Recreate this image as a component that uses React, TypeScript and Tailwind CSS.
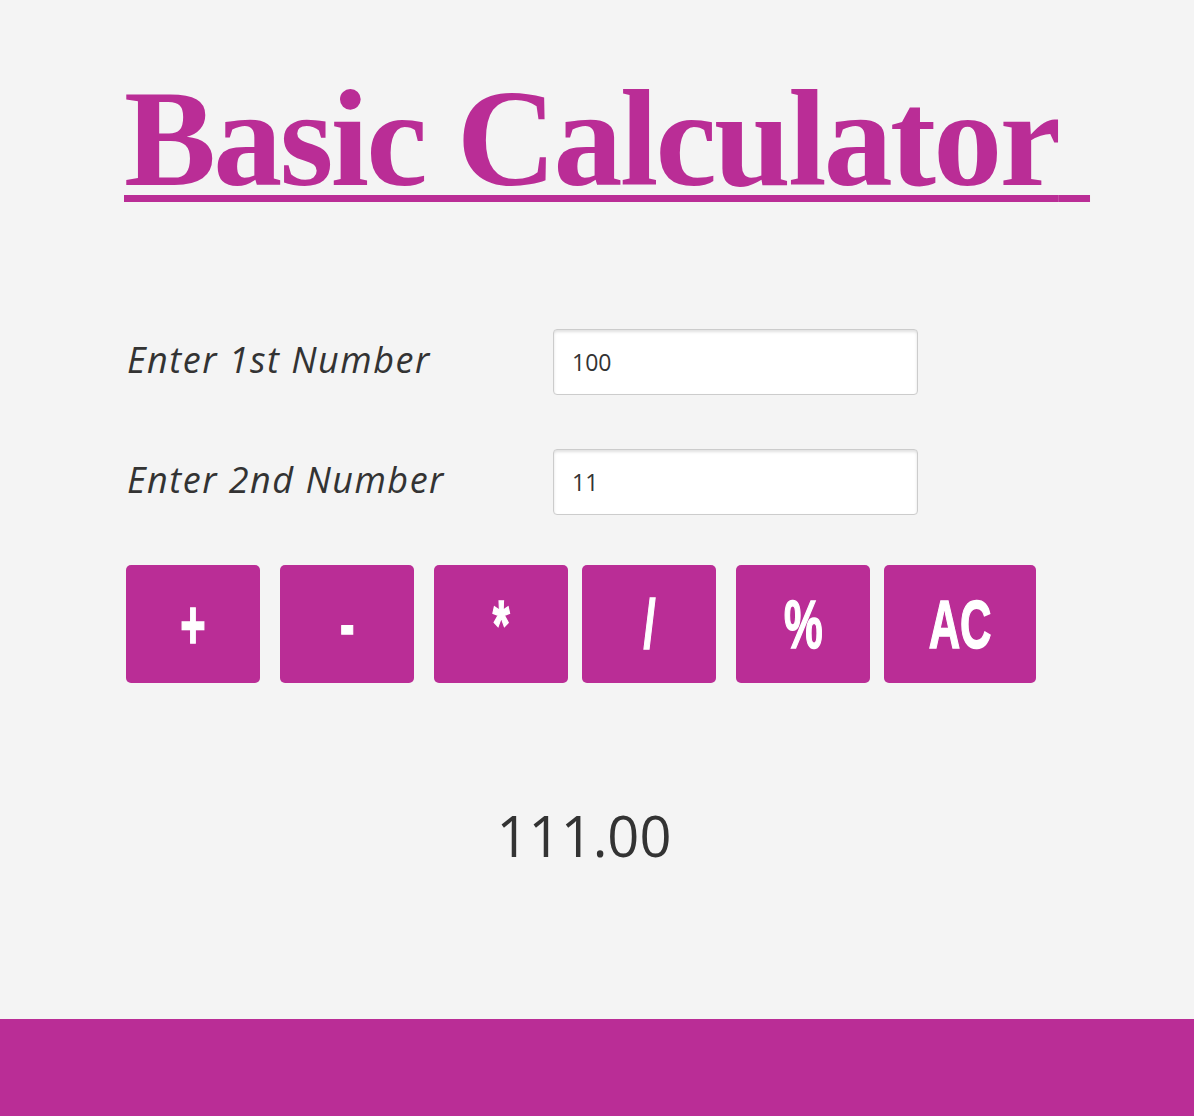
import { useState } from 'react';

const buttons = [
  { label: '+', cls: 'ml-[2px] w-[134px]' },
  { label: '-', cls: 'ml-[20px] w-[134px]' },
  { label: '*', cls: 'ml-[20px] w-[134px]' },
  { label: '/', cls: 'ml-[14px] w-[134px]' },
  { label: '%', cls: 'ml-[20px] w-[134px]' },
  { label: 'AC', cls: 'ml-[14px] w-[152px]' },
];

export default function App() {
  const [a, setA] = useState('100');
  const [b, setB] = useState('11');
  const [result, setResult] = useState('111.00');

  const calc = (op: string) => {
    if (op === 'AC') {
      setA('');
      setB('');
      setResult('');
      return;
    }
    const x = parseFloat(a) || 0;
    const y = parseFloat(b) || 0;
    let r = 0;
    if (op === '+') r = x + y;
    if (op === '-') r = x - y;
    if (op === '*') r = x * y;
    if (op === '/') r = x / y;
    if (op === '%') r = x % y;
    setResult(r.toFixed(2));
  };

  const inputCls =
    "w-[365px] h-[66px] bg-white border border-[#cccccc] rounded-[4px] shadow-[inset_0_2px_3px_rgba(0,0,0,0.12)] pl-[18px] text-[23px] text-[#333333] outline-none font-['Open_Sans',sans-serif]";
  const labelCls =
    "w-[429px] pl-[3px] pb-[4px] italic text-[36px] tracking-[1.5px] text-[#333333] font-['Open_Sans',sans-serif]";

  return (
    <div className="min-h-screen bg-[#f4f4f4] flex flex-col">
      <main className="px-[124px] pt-[70px]">
        <h1 className="whitespace-nowrap text-[138px] leading-none font-bold tracking-[-2.7px] text-[#ba2d96] underline decoration-[7px] underline-offset-[10px] font-['Liberation_Serif',serif]">
          Basic Calculator{'\u00a0'}
        </h1>

        <div className="mt-[121px] flex items-center">
          <label className={labelCls}>Enter 1st Number</label>
          <input className={inputCls} value={a} onChange={(e) => setA(e.target.value)} />
        </div>
        <div className="mt-[54px] flex items-center">
          <label className={labelCls}>Enter 2nd Number</label>
          <input className={inputCls} value={b} onChange={(e) => setB(e.target.value)} />
        </div>

        <div className="mt-[50px] flex">
          {buttons.map((btn) => (
            <button
              key={btn.label}
              onClick={() => calc(btn.label)}
              className={`${btn.cls} h-[118px] rounded-[5px] bg-[#ba2d96] text-white flex items-center justify-center`}
            >
              <span className="inline-block scale-x-[0.64] text-[68px] leading-none font-bold [-webkit-text-stroke:1.5px_white] font-['Liberation_Sans_Narrow','Liberation_Sans',sans-serif]">
                {btn.label}
              </span>
            </button>
          ))}
        </div>

        <div className="mt-[124px] w-[920px] text-center text-[56px] leading-none text-[#333333] font-['Open_Sans',sans-serif]">
          {result}
        </div>
      </main>
      <footer className="mt-auto h-[97px] bg-[#ba2d96]" />
    </div>
  );
}
